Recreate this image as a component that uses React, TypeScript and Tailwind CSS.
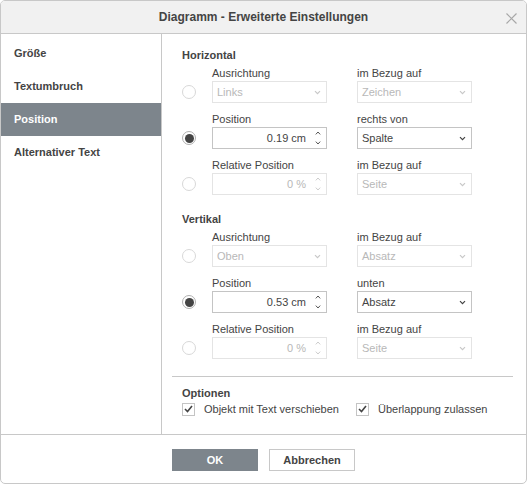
import React from "react";

const font = { fontFamily: '"Liberation Sans", Arial, sans-serif' };

function Chevron({ disabled }: { disabled?: boolean }) {
  return (
    <svg width="7" height="5" viewBox="0 0 7 5" className="shrink-0">
      <path d="M1 1.2 L3.5 3.7 L6 1.2" fill="none" stroke={disabled ? "#c8c8c8" : "#444"} strokeWidth="1.2" />
    </svg>
  );
}

function Spin({ disabled }: { disabled?: boolean }) {
  const c = disabled ? "#cccccc" : "#555";
  return (
    <div className="flex flex-col items-center justify-between h-[14px] w-[8px]">
      <svg width="6" height="4" viewBox="0 0 6 4">
        <path d="M0.8 3.4 L3 1 L5.2 3.4" fill="none" stroke={c} strokeWidth="1" />
      </svg>
      <svg width="6" height="4" viewBox="0 0 6 4">
        <path d="M0.8 0.6 L3 3 L5.2 0.6" fill="none" stroke={c} strokeWidth="1" />
      </svg>
    </div>
  );
}

function Select({ value, disabled }: { value: string; disabled?: boolean }) {
  return (
    <div
      className={`h-[22px] w-[115px] border flex items-center justify-between pl-[4px] pr-[5px] text-[11px] ${
        disabled ? "border-[#e4e4e4] text-[#b8b8b8]" : "border-[#c4c4c4] text-[#444]"
      }`}
    >
      <span>{value}</span>
      <Chevron disabled={disabled} />
    </div>
  );
}

function Spinner({ value, disabled }: { value: string; disabled?: boolean }) {
  return (
    <div
      className={`h-[22px] w-[115px] border flex items-center justify-end pr-[4px] text-[11px] gap-[8px] ${
        disabled ? "border-[#e4e4e4] text-[#b8b8b8]" : "border-[#c4c4c4] text-[#444]"
      }`}
    >
      <span>{value}</span>
      <Spin disabled={disabled} />
    </div>
  );
}

function Radio({ checked }: { checked?: boolean }) {
  return (
    <div
      className={`w-[14px] h-[14px] rounded-full border flex items-center justify-center ${
        checked ? "border-[#b0b0b0]" : "border-[#d8d8d8]"
      }`}
    >
      {checked && <div className="w-[9px] h-[9px] rounded-full bg-[#444]" />}
    </div>
  );
}

function Row({
  checked,
  label1,
  field1,
  label2,
  field2,
}: {
  checked?: boolean;
  label1: string;
  field1: React.ReactNode;
  label2: string;
  field2: React.ReactNode;
}) {
  return (
    <div className="flex mb-[8px]">
      <div className="w-[30px] flex flex-col">
        <div className="h-[16px]" />
        <div className="h-[22px] flex items-center">
          <Radio checked={checked} />
        </div>
      </div>
      <div className="w-[115px]">
        <div className="h-[16px] leading-[16px] text-[#444]">{label1}</div>
        {field1}
      </div>
      <div className="w-[115px] ml-[30px]">
        <div className="h-[16px] leading-[16px] text-[#444]">{label2}</div>
        {field2}
      </div>
    </div>
  );
}

function Check({ label }: { label: string }) {
  return (
    <div className="flex items-center gap-[9px]">
      <div className="w-[13px] h-[13px] border border-[#c4c4c4] flex items-center justify-center">
        <svg width="9" height="8" viewBox="0 0 9 8">
          <path d="M1 4 L3.5 6.5 L8 1" fill="none" stroke="#444" strokeWidth="1.6" />
        </svg>
      </div>
      <span className="text-[#444]">{label}</span>
    </div>
  );
}

export default function App() {
  const items = ["Größe", "Textumbruch", "Position", "Alternativer Text"];
  return (
    <div style={font} className="w-[527px] h-[484px] bg-white border border-[#c8c8c8] rounded-[5px] overflow-hidden flex flex-col text-[11px] text-[#444]">
      <div className="h-[33px] shrink-0 bg-[#f1f1f1] border-b border-[#c8c8c8] flex items-center justify-center relative">
        <span className="font-bold text-[12px] text-[#444]">Diagramm - Erweiterte Einstellungen</span>
        <svg className="absolute right-[9px] top-[12px]" width="11" height="11" viewBox="0 0 11 11">
          <path d="M0.5 0.5 L10.5 10.5 M10.5 0.5 L0.5 10.5" stroke="#a8a8a8" strokeWidth="1.2" />
        </svg>
      </div>
      <div className="flex flex-1 min-h-0">
        <div className="w-[161px] shrink-0 border-r border-[#c8c8c8] pt-[3px]">
          {items.map((it) => (
            <div
              key={it}
              className={`h-[33px] flex items-center pl-[13px] font-bold ${
                it === "Position" ? "bg-[#7d858c] text-white" : "text-[#444]"
              }`}
            >
              {it}
            </div>
          ))}
        </div>
        <div className="flex-1 pt-[13px] pl-[10px] pr-[13px]">
          <div className="pl-[10px]">
            <div className="h-[18px] leading-[16px] font-bold">Horizontal</div>
            <Row label1="Ausrichtung" field1={<Select value="Links" disabled />} label2="im Bezug auf" field2={<Select value="Zeichen" disabled />} />
            <Row checked label1="Position" field1={<Spinner value="0.19 cm" />} label2="rechts von" field2={<Select value="Spalte" />} />
            <Row label1="Relative Position" field1={<Spinner value="0 %" disabled />} label2="im Bezug auf" field2={<Select value="Seite" disabled />} />
            <div className="h-[18px] leading-[16px] font-bold mt-[16px]">Vertikal</div>
            <Row label1="Ausrichtung" field1={<Select value="Oben" disabled />} label2="im Bezug auf" field2={<Select value="Absatz" disabled />} />
            <Row checked label1="Position" field1={<Spinner value="0.53 cm" />} label2="unten" field2={<Select value="Absatz" />} />
            <Row label1="Relative Position" field1={<Spinner value="0 %" disabled />} label2="im Bezug auf" field2={<Select value="Seite" disabled />} />
          </div>
          <div className="border-t border-[#c8c8c8] mt-[17px]" />
          <div className="pl-[10px] pt-[8px]">
            <div className="h-[16px] leading-[16px] font-bold">Optionen</div>
            <div className="flex">
              <div className="w-[174px]">
                <Check label="Objekt mit Text verschieben" />
              </div>
              <Check label="Überlappung zulassen" />
            </div>
          </div>
        </div>
      </div>
      <div className="h-[49px] shrink-0 border-t border-[#c8c8c8] flex justify-center gap-[11px] pt-[14px]">
        <div className="w-[86px] h-[22px] bg-[#7d858c] text-white font-bold flex items-center justify-center">OK</div>
        <div className="w-[86px] h-[22px] border border-[#c8c8c8] text-[#444] font-bold flex items-center justify-center">Abbrechen</div>
      </div>
    </div>
  );
}
